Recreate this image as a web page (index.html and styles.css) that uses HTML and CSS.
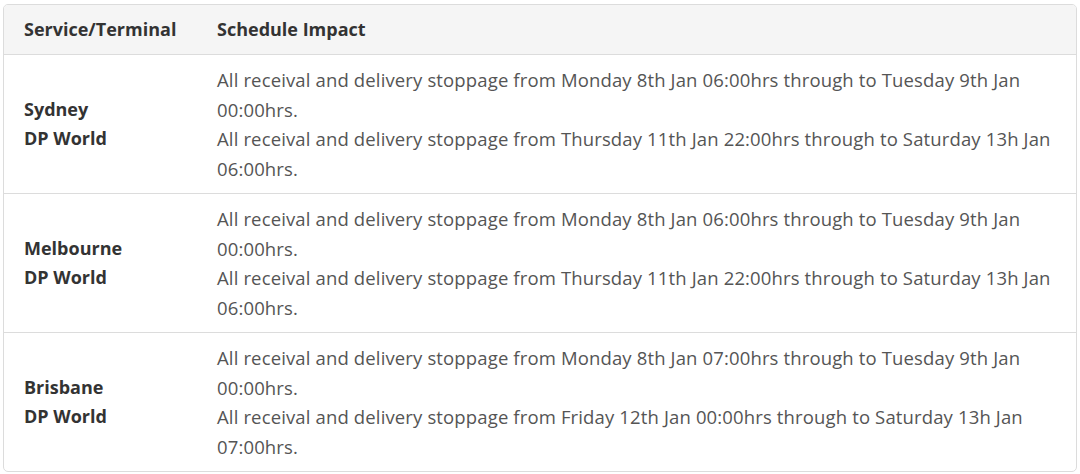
FILE: index.html
```html
<!DOCTYPE html>
<html lang="en">
<head>
<meta charset="utf-8">
<title>Schedule Impact</title>
<link rel="stylesheet" href="styles.css">
</head>
<body>
<div class="wrap">
<table class="impact">
  <thead>
    <tr><th class="col-svc">Service/Terminal</th><th>Schedule Impact</th></tr>
  </thead>
  <tbody>
    <tr>
      <td class="svc">Sydney<br>DP World</td>
      <td>All receival and delivery stoppage from Monday 8th Jan 06:00hrs through to Tuesday 9th Jan 00:00hrs.<br>All receival and delivery stoppage from Thursday 11th Jan 22:00hrs through to Saturday 13h Jan 06:00hrs.</td>
    </tr>
    <tr>
      <td class="svc">Melbourne<br>DP World</td>
      <td>All receival and delivery stoppage from Monday 8th Jan 06:00hrs through to Tuesday 9th Jan 00:00hrs.<br>All receival and delivery stoppage from Thursday 11th Jan 22:00hrs through to Saturday 13h Jan 06:00hrs.</td>
    </tr>
    <tr>
      <td class="svc">Brisbane<br>DP World</td>
      <td>All receival and delivery stoppage from Monday 8th Jan 07:00hrs through to Tuesday 9th Jan 00:00hrs.<br>All receival and delivery stoppage from Friday 12th Jan 00:00hrs through to Saturday 13h Jan 07:00hrs.</td>
    </tr>
  </tbody>
</table>
</div>
</body>
</html>
```
FILE: styles.css
```css
html, body { margin: 0; padding: 0; background: #fff; }
.wrap { padding: 4px 3px; }
.impact {
  width: 100%;
  border-collapse: separate;
  border-spacing: 0;
  border: 1px solid #dcdcdc;
  border-radius: 5px;
  overflow: hidden;
  font-family: "Open Sans", "Noto Sans", sans-serif;
  color: #555;
  font-size: 18.5px;
  letter-spacing: 0.14px;
  line-height: 29.5px;
}
.impact th {
  background: #f5f5f5;
  text-align: left;
  font-weight: 700;
  font-size: 18px;
  letter-spacing: 0;
  color: #333;
  padding: 10px 20px;
  border-bottom: 1px solid #dcdcdc;
  line-height: 29px;
}
.impact th.col-svc { width: 153px; }
.impact td {
  padding: 10px 20px;
  vertical-align: middle;
  border-bottom: 1px solid #dcdcdc;
}
.impact tr:last-child td { border-bottom: none; }
.impact td.svc { font-weight: 700; font-size: 18px; letter-spacing: 0; color: #333; }
```
